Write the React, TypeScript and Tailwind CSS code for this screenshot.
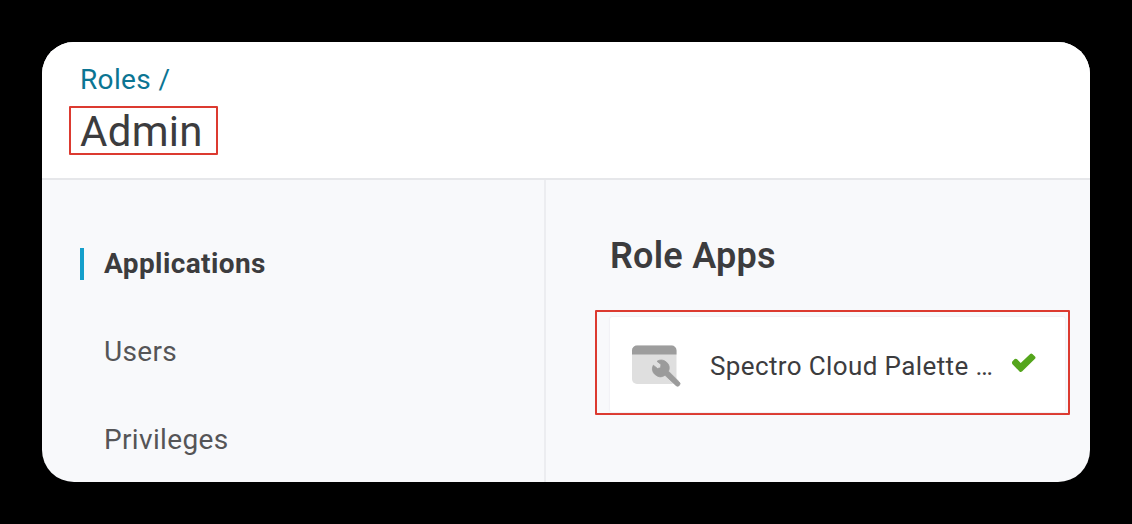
export default function App() {
  return (
    <div className="h-[524px] w-[1132px] bg-black p-[42px] font-['Roboto',sans-serif] text-[#3c3c3e]">
      <div className="flex h-[440px] w-[1048px] flex-col overflow-hidden rounded-[32px] bg-[#f8f9fb]">
        <header className="flex h-[138px] shrink-0 flex-col items-start border-b-2 border-[#e6e7ea] bg-white pt-[21px]">
          <a className="ml-[38px] text-[28px] leading-[34px] tracking-[0.35px] text-[#0b7593]">Roles /</a>
          <h1 className="ml-[27px] mt-[9px] flex h-[49px] w-[149px] items-center rounded-[1px] border-2 border-[#dc3a30] pl-[9px] pt-[2px] text-[42px] leading-[47px] tracking-[0.3px]">Admin</h1>
        </header>
        <div className="flex flex-1">
          <nav className="flex w-[504px] shrink-0 flex-col gap-[56px] border-r-2 border-[#ecedf0] pl-[38px] pt-[68px] text-[28px] leading-[32px]">
            <a className="border-l-4 border-[#159fcb] pl-[20px] font-bold tracking-[0.4px]">Applications</a>
            <a className="pl-[24px] tracking-[0.35px] text-[#555557]">Users</a>
            <a className="pl-[24px] tracking-[0.35px] text-[#555557]">Privileges</a>
          </nav>
          <main className="flex flex-col pl-[49px] pt-[54px]">
            <h2 className="ml-[15px] text-[36px] font-semibold leading-[44px] tracking-[0.25px]">Role Apps</h2>
            <div className="mt-[32px] h-[105px] w-[475px] rounded-[1px] border-2 border-[#dc3a30] pb-px pl-[13px] pr-[3px] pt-[5px]">
              <div className="flex h-full items-center rounded-[2px] bg-white pl-[21px] pt-[3px] shadow-[0_0_2px_#dfe1e6]">
                <svg className="-mt-[2px] size-[50px] shrink-0" viewBox="0 0 50 50">
                  <rect x="1" y="5.5" width="44.5" height="38.5" rx="5" fill="#dfdfdf" />
                  <path d="M1 14.500V10.500a5 5 0 0 1 5-5h34.500a5 5 0 0 1 5 5v4z" fill="#9d9d9d" />
                  <path d="M26 21.300A8 8 0 0 1 37.500 31.300L48.300 42a2.400 2.400 0 0 1-3.400 3.400L34 35.300A8 8 0 0 1 22.300 25.200L26.500 28.500L29.500 27.800L30 24.500z" fill="#9b9b9b" stroke="#9b9b9b" strokeWidth="0.8" strokeLinejoin="round" />
                </svg>
                <span className="ml-[29px] w-[301px] whitespace-nowrap text-[26px] leading-[32px] tracking-[0.38px]">Spectro Cloud Palette …</span>
                <svg className="-mt-[6px] h-[20px] w-[26px]" viewBox="0 0 26 20">
                  <path d="M1.700 8.100L3.700 6.100Q4.900 5.200 6.100 6.200L9.700 9.900L19.200 1Q20.300 0 21.400 1L24 3.500Q25 4.700 24 5.800L11 18.500Q9.700 19.500 8.500 18.400L1.500 11.300Q.3 9.600 1.700 8.100Z" fill="#54a51c" />
                </svg>
              </div>
            </div>
          </main>
        </div>
      </div>
    </div>
  );
}
